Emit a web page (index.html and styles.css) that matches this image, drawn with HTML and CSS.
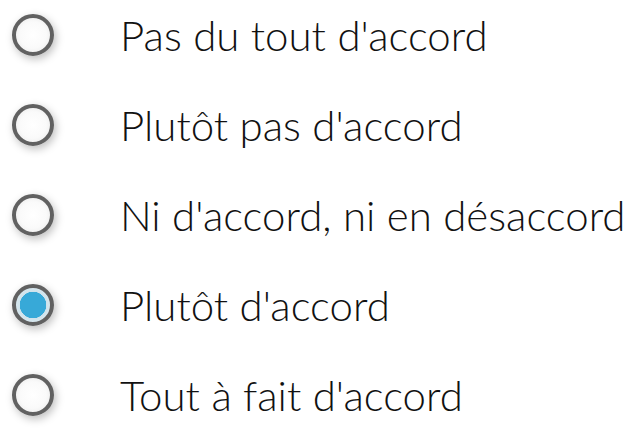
FILE: index.html
```html
<!DOCTYPE html>
<html lang="fr">
<head>
<meta charset="utf-8">
<link rel="stylesheet" href="styles.css">
</head>
<body>
<ul class="choices">
  <li class="choice"><span class="radio"></span><span class="label">Pas du tout d'accord</span></li>
  <li class="choice"><span class="radio"></span><span class="label">Plutôt pas d'accord</span></li>
  <li class="choice"><span class="radio"></span><span class="label">Ni d'accord, ni en désaccord</span></li>
  <li class="choice"><span class="radio checked"></span><span class="label">Plutôt d'accord</span></li>
  <li class="choice"><span class="radio"></span><span class="label">Tout à fait d'accord</span></li>
</ul>
</body>
</html>
```
FILE: styles.css
```css
html, body {
  margin: 0;
  padding: 0;
  background: #ffffff;
}
body {
  width: 624px;
  height: 436px;
  overflow: hidden;
  font-family: Lato, "Open Sans", sans-serif;
}
.choices {
  list-style: none;
  margin: 0;
  padding: 14px 0 0 12px;
  display: flex;
  flex-direction: column;
  gap: 48px;
}
.choice {
  display: flex;
  align-items: center;
  height: 42px;
}
.radio {
  box-sizing: border-box;
  flex: none;
  width: 42px;
  height: 42px;
  border-radius: 50%;
  border: 4.5px solid #616161;
  background: radial-gradient(circle, #ffffff 0%, #fafafa 55%, #e4e4e4 100%);
  box-shadow: 2px 3px 9px rgba(0, 0, 0, 0.26);
}
.radio.checked {
  background: radial-gradient(circle, #37a9d8 0, #37a9d8 13px, #cfe3ec 13.5px, #e8eef1 100%);
}
.label {
  margin-left: 66px;
  font-size: 42px;
  font-weight: 300;
  color: #111111;
  white-space: nowrap;
}
```
